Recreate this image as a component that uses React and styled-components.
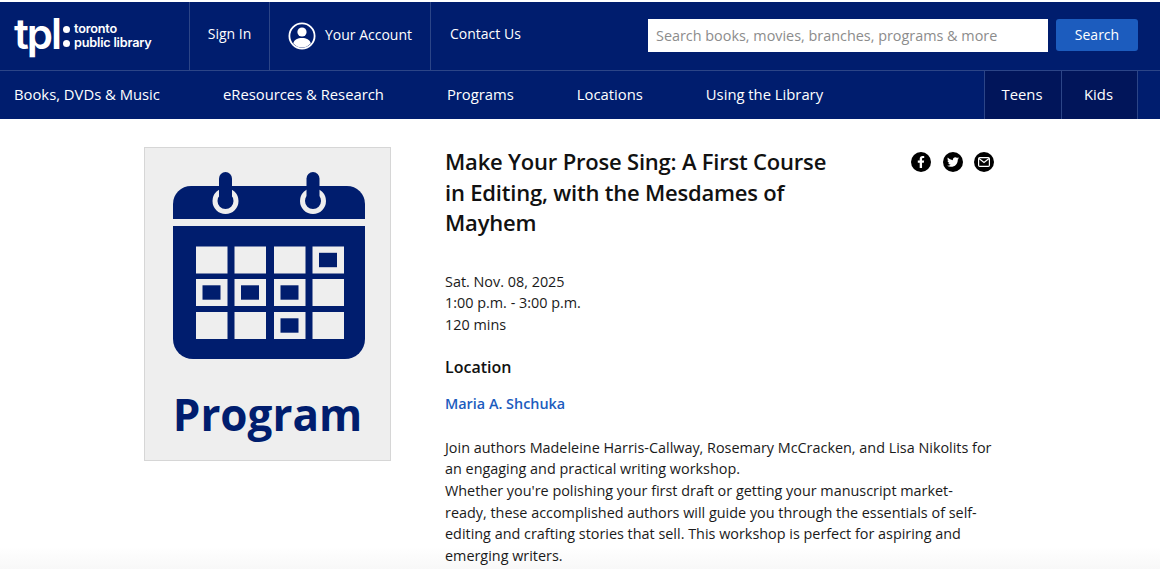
import styled, { createGlobalStyle } from "styled-components";
import { FaFacebookF, FaTwitter } from "react-icons/fa";

const GlobalStyle = createGlobalStyle`
  html, body {
    margin: 0;
    padding: 0;
    height: 569px;
    overflow: hidden;
    background: #ffffff;
    font-family: "Open Sans", "Noto Sans", sans-serif;
    color: #1a1a1a;
  }
  body {
    background: linear-gradient(to top, #f8f8f8, #ffffff 22px);
  }
`;

const cells = [
  [false, false, false, true],
  [true, true, true, false],
  [false, false, true, false],
];
const cellX = [23, 61.5, 101, 139.5];
const cellY = [75.5, 108, 141];

function CalendarIcon() {
  return (
    <CalendarSvg viewBox="0 0 192 188" aria-hidden="true">
      <path d="M0 48V33a18 18 0 0 1 18-18h156a18 18 0 0 1 18 18v15z" fill="#001d6e" />
      <path d="M0 55h192v113a20 20 0 0 1-20 20H20a20 20 0 0 1-20-20z" fill="#001d6e" />
      <circle cx="52.5" cy="30" r="10.5" fill="#001d6e" stroke="#eeeeee" strokeWidth="5" />
      <circle cx="140" cy="30" r="10.5" fill="#001d6e" stroke="#eeeeee" strokeWidth="5" />
      <rect x="46" y="1" width="13" height="36" rx="6.5" fill="#001d6e" />
      <rect x="133.5" y="1" width="13" height="36" rx="6.5" fill="#001d6e" />
      {cells.map((row, r) =>
        row.map((marked, c) => (
          <g key={`${r}-${c}`}>
            <rect x={cellX[c]} y={cellY[r]} width="31.5" height="27" fill="#eeeeee" />
            {marked && <rect x={cellX[c] + 6.5} y={cellY[r] + 6.3} width="18" height="14.4" fill="#001d6e" />}
          </g>
        ))
      )}
    </CalendarSvg>
  );
}

function AccountIcon() {
  return (
    <AccountSvg viewBox="0 0 28 28" aria-hidden="true">
      <circle cx="14" cy="14" r="12.6" fill="none" stroke="#fff" strokeWidth="1.8" />
      <circle cx="14" cy="10" r="4.6" fill="#fff" />
      <path d="M5.2 21.2c1.2-3.600 4.400-5.200 8.800-5.200s7.600 1.600 8.800 5.200A12 12 0 0 1 14 25.600a12 12 0 0 1-8.800-4.400z" fill="#fff" />
    </AccountSvg>
  );
}

function MailIcon() {
  return (
    <svg width="12" height="10" viewBox="0 0 12 10" aria-hidden="true">
      <rect x="0.6" y="0.6" width="10.8" height="8.800" rx="1.2" fill="none" stroke="#fff" strokeWidth="1.2" />
      <path d="M1 1.500l5 4 5-4" fill="none" stroke="#fff" strokeWidth="1.2" />
    </svg>
  );
}

export default function App() {
  return (
    <>
      <GlobalStyle />
      <Header>
        <TopBar>
          <LogoCell>
            <LogoMark>tpl</LogoMark>
            <LogoDots>
              <i />
              <i />
            </LogoDots>
            <LogoText>
              <span>toronto</span>
              <span>public library</span>
            </LogoText>
          </LogoCell>
          <TopLink $width={80} $lift={6}>Sign In</TopLink>
          <TopLink $width={161} $gap={9} $lift={4}>
            <AccountIcon />
            Your Account
          </TopLink>
          <ContactLink>Contact Us</ContactLink>
          <SearchForm>
            <SearchInput placeholder="Search books, movies, branches, programs & more" />
            <SearchButton type="button">Search</SearchButton>
          </SearchForm>
        </TopBar>
        <NavBar>
          <NavLinks>
            <NavLink>Books, DVDs &amp; Music</NavLink>
            <NavLink>eResources &amp; Research</NavLink>
            <NavLink>Programs</NavLink>
            <NavLink>Locations</NavLink>
            <NavLink>Using the Library</NavLink>
          </NavLinks>
          <AudienceTab>Teens</AudienceTab>
          <AudienceTab>Kids</AudienceTab>
        </NavBar>
      </Header>
      <Main>
        <Card>
          <CalendarIcon />
          <CardLabel>Program</CardLabel>
        </Card>
        <Details>
          <TitleRow>
            <Title>Make Your Prose Sing: A First Course in Editing, with the Mesdames of Mayhem</Title>
            <Share>
              <ShareIcon><FaFacebookF size={12} /></ShareIcon>
              <ShareIcon><FaTwitter size={12} /></ShareIcon>
              <ShareIcon><MailIcon /></ShareIcon>
            </Share>
          </TitleRow>
          <Schedule>
            <div>Sat. Nov. 08, 2025</div>
            <div>1:00 p.m. - 3:00 p.m.</div>
            <div>120 mins</div>
          </Schedule>
          <SectionTitle>Location</SectionTitle>
          <BranchLink>Maria A. Shchuka</BranchLink>
          <Description>
            Join authors Madeleine Harris-Callway, Rosemary McCracken, and Lisa Nikolits for an engaging and practical
            writing workshop.
            <br />
            Whether you're polishing your first draft or getting your manuscript market-ready, these accomplished authors
            will guide you through the essentials of self-editing and crafting stories that sell. This workshop is perfect
            for aspiring and emerging writers.
          </Description>
        </Details>
      </Main>
    </>
  );
}

const Header = styled.header`
  margin-top: 2px;
  background: #001d6e;
  color: #ffffff;
`;

const TopBar = styled.div`
  display: flex;
  height: 68px;
  border-bottom: 1px solid #2c4587;
`;

const LogoCell = styled.div`
  width: 190px;
  box-sizing: border-box;
  padding-left: 14px;
  display: flex;
  align-items: center;
  border-right: 1px solid #2c4587;
`;

const LogoMark = styled.span`
  font-family: "Inter", sans-serif;
  font-size: 42px;
  font-weight: 600;
  letter-spacing: -2px;
  line-height: 42px;
  margin-top: -4px;
`;

const LogoDots = styled.span`
  display: flex;
  flex-direction: column;
  gap: 7px;
  margin: 0 4px 0 3px;

  i {
    display: block;
    width: 7px;
    height: 7px;
    border-radius: 50%;
    background: #ffffff;
  }
`;

const LogoText = styled.span`
  display: flex;
  flex-direction: column;
  font-family: "Inter", sans-serif;
  font-size: 12.700px;
  font-weight: 600;
  line-height: 14px;
  letter-spacing: -0.2px;
`;

const TopLink = styled.a`
  width: ${(p) => p.$width}px;
  box-sizing: border-box;
  display: flex;
  align-items: center;
  justify-content: center;
  gap: ${(p) => p.$gap || 0}px;
  padding-bottom: ${(p) => p.$lift}px;
  border-right: 1px solid #2c4587;
  font-size: 14px;
  font-weight: 500;
`;

const AccountSvg = styled.svg`
  width: 28px;
  height: 28px;
  margin-top: 3px;
`;

const ContactLink = styled.a`
  padding: 0 0 6px 19px;
  display: flex;
  align-items: center;
  font-size: 14px;
  font-weight: 500;
`;

const SearchForm = styled.form`
  margin-left: auto;
  margin-right: 22px;
  display: flex;
  align-items: center;
  gap: 8px;
  padding-bottom: 2px;
`;

const SearchInput = styled.input`
  width: 400px;
  height: 33px;
  box-sizing: border-box;
  border: 0;
  border-radius: 0;
  padding: 0 8px;
  background: #ffffff;
  font-family: "Open Sans", sans-serif;
  font-size: 14.4px;
  outline: none;

  &::placeholder {
    color: #8c8c8c;
    opacity: 1;
  }
`;

const SearchButton = styled.button`
  width: 82px;
  height: 32px;
  border: 0;
  border-radius: 3px;
  background: #1c5cbe;
  color: #ffffff;
  font-family: "Open Sans", sans-serif;
  font-size: 14px;
  padding-bottom: 2px;
`;

const NavBar = styled.nav`
  display: flex;
  height: 48px;
  padding-left: 14px;
  padding-right: 22px;
`;

const NavLinks = styled.div`
  display: flex;
  align-items: center;
  gap: 63px;
  flex: 1;
  padding-bottom: 3px;
`;

const NavLink = styled.a`
  font-size: 14.8px;
  font-weight: 500;
`;

const AudienceTab = styled.a`
  width: 77px;
  box-sizing: border-box;
  display: flex;
  align-items: center;
  justify-content: center;
  padding-bottom: 3px;
  padding-right: 2px;
  background: #01155a;
  border-left: 1px solid #2c4587;
  font-size: 14.8px;
  font-weight: 500;

  &:last-child {
    border-right: 1px solid #2c4587;
  }
`;

const Main = styled.main`
  display: flex;
  align-items: flex-start;
  gap: 54px;
  padding: 28px 0 0 144px;
`;

const Card = styled.div`
  width: 247px;
  height: 314px;
  box-sizing: border-box;
  background: #eeeeee;
  border: 1px solid #d6d6d6;
  display: flex;
  flex-direction: column;
  align-items: center;
  padding-top: 23px;
`;

const CalendarSvg = styled.svg`
  display: block;
  width: 192px;
  height: 188px;
  margin-left: 2px;
`;

const CardLabel = styled.div`
  margin-top: 25px;
  font-size: 44px;
  line-height: 60px;
  font-weight: 700;
  color: #001d6e;
`;

const Details = styled.div`
  width: 549px;
`;

const TitleRow = styled.div`
  display: flex;
  justify-content: space-between;
  align-items: flex-start;
`;

const Title = styled.h1`
  width: 400px;
  margin: -1px 0 0;
  font-size: 22px;
  line-height: 30.500px;
  font-weight: 600;
  letter-spacing: -0.2px;
  color: #111111;
`;

const Share = styled.div`
  display: flex;
  gap: 11.500px;
  margin-top: 5px;
`;

const ShareIcon = styled.span`
  width: 20px;
  height: 20px;
  border-radius: 50%;
  background: #000000;
  color: #ffffff;
  display: flex;
  align-items: center;
  justify-content: center;
`;

const Schedule = styled.div`
  margin-top: 33px;
  font-size: 14.4px;
  line-height: 21.600px;
`;

const SectionTitle = styled.h2`
  margin: 20px 0 0;
  font-size: 16px;
  line-height: 24px;
  font-weight: 600;
  color: #111111;
`;

const BranchLink = styled.a`
  display: block;
  margin-top: 14px;
  font-size: 14.4px;
  line-height: 21.600px;
  font-weight: 600;
  color: #1c5cbe;
`;

const Description = styled.p`
  margin: 22px 0 0;
  font-size: 14.4px;
  line-height: 21.600px;
`;
